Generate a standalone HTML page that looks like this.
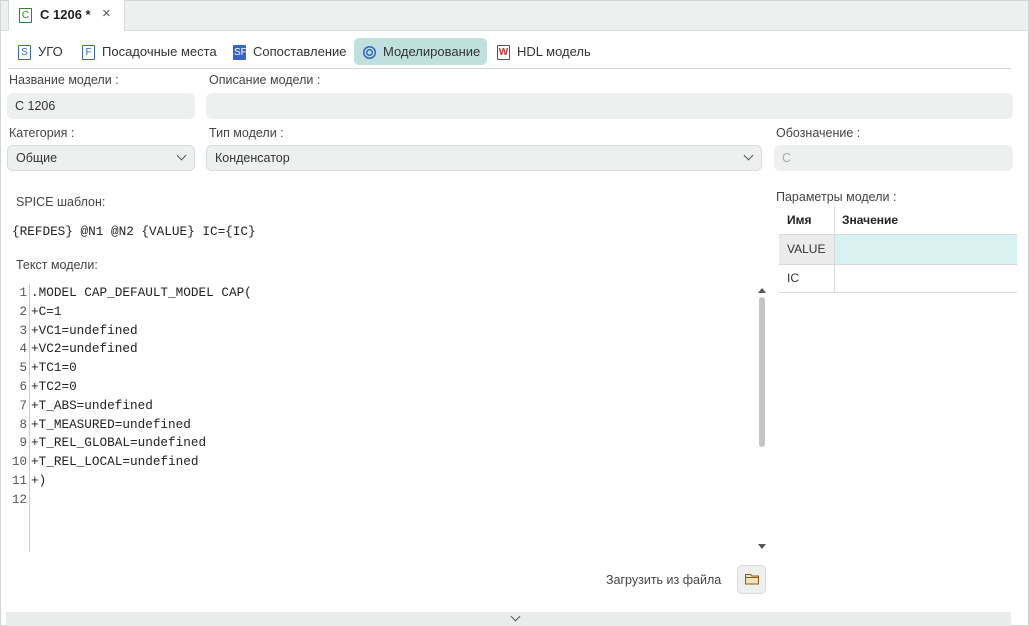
<!DOCTYPE html><html><head><meta charset="utf-8"><style>
body{margin:0;width:1029px;height:626px;background:#fff;font-family:"Liberation Sans",sans-serif;font-size:12px;color:#333;position:relative;overflow:hidden}
.a{position:absolute}
.lbl{position:absolute;font-size:12.5px;color:#444}
.inp{position:absolute;background:#eef0ef;border-radius:6px;height:26px;line-height:26px;padding-left:8px;box-sizing:border-box;font-size:12.5px;color:#333}
.sel{border:1px solid #d5dbd9;line-height:24px}
.chev{position:absolute;right:9px;top:6px;width:6px;height:6px;border-right:1.3px solid #555;border-bottom:1.3px solid #555;transform:rotate(45deg)}
.ic{display:inline-block;width:11px;height:13px;border:1px solid #3a63c8;font-size:10px;line-height:13px;text-align:center;color:#3a63c8;vertical-align:middle;margin-right:7px;border-radius:1px}
.st{position:absolute;top:38px;height:27px;line-height:27px;font-size:13px;color:#333}
.code{position:absolute;left:31px;top:284px;font-family:"Liberation Mono",monospace;font-size:12.7px;line-height:18.8px;color:#222;white-space:pre}
.ln{position:absolute;left:8px;top:284px;font-family:"Liberation Mono",monospace;font-size:12.5px;line-height:18.8px;color:#555;text-align:right;width:19px;white-space:pre}
</style></head><body>
<div class="a" style="left:0;top:0;width:1029px;height:30px;background:#eef0ef;border-bottom:1px solid #d5dbd9"></div>
<div class="a" style="left:0;top:0;width:1027px;height:624px;border:1px solid #cfd6d4"></div>
<div class="a" style="left:8px;top:0;width:115px;height:31px;background:#fff;border-left:1px solid #d5dbd9;border-right:1px solid #d5dbd9"></div>
<div class="a" style="left:19px;top:8px;width:11px;height:13px;border:1px solid #2f8a2f;font-size:10px;line-height:13px;text-align:center;color:#2f8a2f">C</div>
<div class="a" style="left:40px;top:7px;font-weight:bold;font-size:13px;color:#222">С 1206 *</div>
<div class="a" style="left:102px;top:5px;font-size:15px;color:#555">×</div>
<div class="st" style="left:18px"><span class="ic">S</span>УГО</div>
<div class="st" style="left:82px"><span class="ic">F</span>Посадочные места</div>
<div class="st" style="left:233px"><span class="ic" style="background:#3a63c8;color:#fff">SF</span>Сопоставление</div>
<div class="a" style="left:354px;top:38px;width:133px;height:27px;background:#bfe0dd;border-radius:5px"></div>
<div class="st" style="left:363px"><span class="ic" style="border:none;border-radius:50%;box-shadow:inset 0 0 0 1.5px #3a63c8, inset 0 0 0 3px #bfe0dd, inset 0 0 0 4.5px #3a63c8;width:13px;height:13px"></span>Моделирование</div>
<div class="st" style="left:497px"><span class="ic" style="border-color:#555;background:#fff;color:#c33;font-weight:bold">W</span>HDL модель</div>
<div class="a" style="left:8px;top:68px;width:1003px;height:1px;background:#cfd6d4"></div>
<div class="lbl" style="left:9px;top:73px">Название модели :</div>
<div class="inp" style="left:7px;top:93px;width:188px">С 1206</div>
<div class="lbl" style="left:209px;top:73px">Описание модели :</div>
<div class="inp" style="left:206px;top:93px;width:807px"></div>
<div class="lbl" style="left:9px;top:126px">Категория :</div>
<div class="inp sel" style="left:7px;top:145px;width:188px">Общие<span class="chev"></span></div>
<div class="lbl" style="left:209px;top:126px">Тип модели :</div>
<div class="inp sel" style="left:206px;top:145px;width:556px">Конденсатор<span class="chev"></span></div>
<div class="lbl" style="left:776px;top:126px">Обозначение :</div>
<div class="inp" style="left:774px;top:145px;width:239px;color:#aaa">C</div>
<div class="lbl" style="left:16px;top:195px">SPICE шаблон:</div>
<div class="a" style="left:12px;top:224px;font-family:'Liberation Mono',monospace;font-size:12.7px;color:#222">{REFDES} @N1 @N2 {VALUE} IC={IC}</div>
<div class="lbl" style="left:16px;top:258px">Текст модели:</div>
<div class="a" style="left:29px;top:284px;width:1px;height:268px;background:#ccc"></div>
<div class="ln">1
2
3
4
5
6
7
8
9
10
11
12</div>
<div class="code">.MODEL CAP_DEFAULT_MODEL CAP(
+C=1
+VC1=undefined
+VC2=undefined
+TC1=0
+TC2=0
+T_ABS=undefined
+T_MEASURED=undefined
+T_REL_GLOBAL=undefined
+T_REL_LOCAL=undefined
+)
</div>
<div class="a" style="left:758px;top:288px;border:4px solid transparent;border-bottom:5px solid #555;border-top:0"></div>
<div class="a" style="left:759px;top:297px;width:6px;height:150px;background:#c4c4c4;border-radius:3px"></div>
<div class="a" style="left:758px;top:544px;border:4px solid transparent;border-top:5px solid #555;border-bottom:0"></div>
<div class="lbl" style="left:776px;top:190px">Параметры модели :</div>
<div class="a" style="left:779px;top:206px;width:238px;height:87px">
<div class="a" style="left:55px;top:0;width:1px;height:87px;background:#d5dbd9"></div>
<div class="a" style="left:0;top:28px;width:238px;height:29px;background:#d9f2f1;border-top:1px solid #d5dbd9;border-bottom:1px solid #d5dbd9"></div>
<div class="a" style="left:0;top:29px;width:55px;height:29px;background:#ebebeb"></div>
<div class="a" style="left:0;top:86px;width:238px;height:1px;background:#d5dbd9"></div>
<div class="a" style="left:55px;top:28px;width:1px;height:59px;background:#d5dbd9"></div>
<div class="a" style="left:8px;top:7px;font-weight:bold;color:#222">Имя</div>
<div class="a" style="left:63px;top:7px;font-weight:bold;color:#222">Значение</div>
<div class="a" style="left:8px;top:36px;color:#333">VALUE</div>
<div class="a" style="left:8px;top:65px;color:#333">IC</div>
</div>
<div class="lbl" style="left:606px;top:573px">Загрузить из файла</div>
<div class="a" style="left:737px;top:565px;width:29px;height:29px;background:#eef0ef;border:1px solid #d5dbd9;border-radius:5px;box-sizing:border-box"></div>
<svg class="a" style="left:744px;top:572px" width="16" height="14"><path d="M1.5 2.5h5l1.5 1.5h6.5v8h-13z" fill="#efe1c0" stroke="#8a5a10"/><path d="M1.5 5.5h13" stroke="#8a5a10"/></svg>
<div class="a" style="left:6px;top:612px;width:1005px;height:14px;background:#eaeceb"></div>
<div class="a" style="left:512px;top:613px;width:6px;height:6px;border-right:1.3px solid #555;border-bottom:1.3px solid #555;transform:rotate(45deg)"></div>
</body></html>
